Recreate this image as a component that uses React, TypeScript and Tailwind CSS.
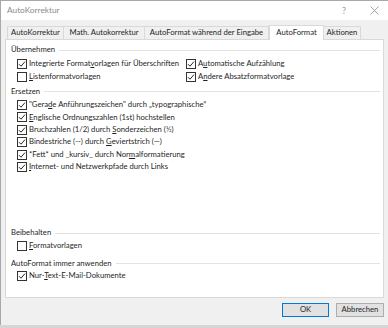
import type { ReactNode } from 'react';

const font = { fontFamily: 'Lato, "Noto Sans", sans-serif' };

function Box({ checked }: { checked: boolean }) {
  return (
    <span className="flex h-[10px] w-[10px] shrink-0 items-center justify-center border border-[#333] bg-white">
      {checked && (
        <svg width="8" height="8" viewBox="0 0 8 8" fill="none">
          <path d="M1 4.2 L3 6.2 L7 1.6" stroke="#262626" strokeWidth="1" />
        </svg>
      )}
    </span>
  );
}

function Check({ checked, children, className = '' }: { checked: boolean; children: ReactNode; className?: string }) {
  return (
    <div className={`flex h-[12.4px] items-center gap-[2px] ${className}`}>
      <Box checked={checked} />
      <span className="whitespace-nowrap leading-none">{children}</span>
    </div>
  );
}

function Group({ title, className = '' }: { title: string; className?: string }) {
  return (
    <div className={`flex h-[12px] items-center gap-[4px] pl-[5px] pr-[3px] ${className}`}>
      <span className="whitespace-nowrap leading-none">{title}</span>
      <div className="h-px flex-1 bg-[#e3e3e3]" />
    </div>
  );
}

const u = (s: string) => <span className="underline underline-offset-1">{s}</span>;

const tabs = [
  { label: 'AutoKorrektur', w: 'w-[57px]' },
  { label: 'Math. Autokorrektur', w: 'w-[82px]' },
  { label: 'AutoFormat während der Eingabe', w: 'w-[125px]' },
  { label: 'AutoFormat', w: 'w-[55px]', active: true },
  { label: 'Aktionen', w: 'w-[38px]' },
];

export default function App() {
  return (
    <div className="h-[328px] w-[388px] overflow-hidden bg-[#d6d6d6] text-[7.7px] text-[#1f1f1f]" style={font}>
      <div className="flex h-[325px] flex-col border-l border-t border-[#a8a8a8] bg-[#f0f0f0]">
        {/* Titelleiste */}
        <div className="flex h-[19px] items-center bg-white pl-[6px] pr-[8px]">
          <span className="text-[8.3px] text-[#8c8c8c]">AutoKorrektur</span>
          <span className="ml-auto mr-[24px] text-[9px] text-[#9a9a9a]">?</span>
          <svg width="9" height="9" viewBox="0 0 9 9" className="mr-[1px]">
            <path d="M0.5 0.5 L8.5 8.5 M8.5 0.5 L0.5 8.5" stroke="#8c8c8c" strokeWidth="0.8" />
          </svg>
        </div>

        {/* Tabs */}
        <div className="mt-[4px] flex h-[15px] items-end pl-[6px]">
          {tabs.map((t) =>
            t.active ? (
              <div
                key={t.label}
                className={`relative z-10 -mb-px flex h-[15px] items-center justify-center border border-b-0 border-[#d9d9d9] bg-white ${t.w}`}
              >
                <span className="whitespace-nowrap leading-none">{t.label}</span>
              </div>
            ) : (
              <div
                key={t.label}
                className={`-ml-px flex h-[13px] items-center justify-center border border-b-0 border-[#d9d9d9] bg-[#f0f0f0] first:ml-0 ${t.w}`}
              >
                <span className="whitespace-nowrap leading-none">{t.label}</span>
              </div>
            ),
          )}
        </div>

        {/* Register */}
        <div className="mx-[4px] h-[259px] border border-[#d9d9d9] bg-white pt-[4px]">
          <Group title="Übernehmen" />
          <div className="mt-[2px] flex pl-[11px]">
            <div className="w-[169px]">
              <Check checked>Integrierte Format{u('v')}orlagen für Überschriften</Check>
              <Check checked={false}>{u('L')}istenformatvorlagen</Check>
            </div>
            <div>
              <Check checked>A{u('u')}tomatische Aufzählung</Check>
              <Check checked>A{u('n')}dere Absatzformatvorlage</Check>
            </div>
          </div>

          <Group title="Ersetzen" className="mt-[3px]" />
          <div className="mt-[1px] pl-[11px]">
            <Check checked>"Gera{u('d')}e Anführungszeichen" durch „typographische“</Check>
            <Check checked>{u('E')}nglische Ordnungszahlen (1st) hochstellen</Check>
            <Check checked>Bruchzahlen (1/2) durch {u('S')}onderzeichen (½)</Check>
            <Check checked>Bindestriche (--) durch {u('G')}eviertstrich (—)</Check>
            <Check checked>*Fett* und _kursiv_ durch Nor{u('m')}alformatierung</Check>
            <Check checked>{u('I')}nternet- und Netzwerkpfade durch Links</Check>
          </div>

          <Group title="Beibehalten" className="mt-[54px]" />
          <div className="mt-px pl-[11px]">
            <Check checked={false}>{u('F')}ormatvorlagen</Check>
          </div>

          <Group title="AutoFormat immer anwenden" className="mt-[5px] h-[11px]" />
          <div className="pl-[11px]">
            <Check checked>Nur-{u('T')}ext-E-Mail-Dokumente</Check>
          </div>
        </div>

        {/* Schaltflächen */}
        <div className="mt-[5px] flex justify-end gap-[7px] pr-[4px]">
          <button className="flex h-[14px] w-[47px] items-center justify-center border border-[#0078d7] bg-[#e1e1e1] leading-none">
            OK
          </button>
          <button className="flex h-[14px] w-[48px] items-center justify-center border border-[#adadad] bg-[#e1e1e1] leading-none">
            Abbrechen
          </button>
        </div>
      </div>
    </div>
  );
}
